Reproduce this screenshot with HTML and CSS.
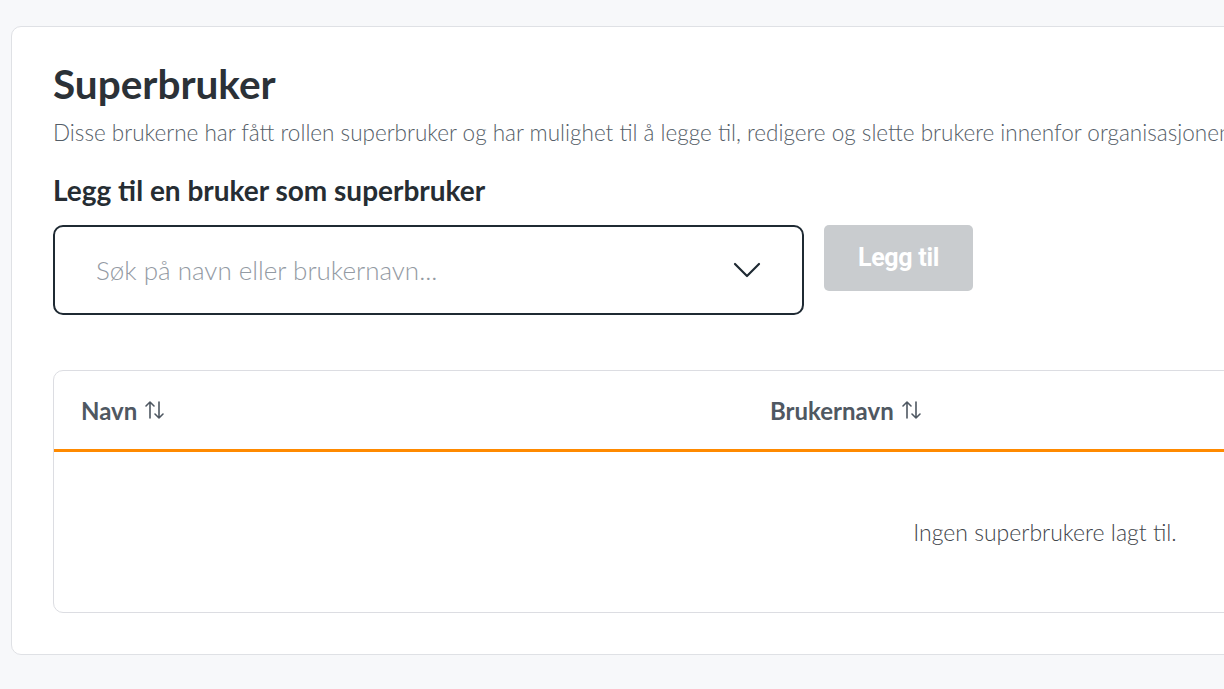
FILE: index.html
```html
<!DOCTYPE html>
<html lang="no">
<head>
    <meta charset="UTF-8">
    <meta name="viewport" content="width=device-width, initial-scale=1.0">
    <title>Superbruker</title>
    <link rel="stylesheet" href="styles.css">
</head>
<body>
    <section class="card">
        <h1>Superbruker</h1>
        <p class="lead">Disse brukerne har fått rollen superbruker og har mulighet til å legge til, redigere og slette brukere innenfor organisasjonen.</p>
        <h2>Legg til en bruker som superbruker</h2>
        <div class="add-row">
            <div class="select">
                <span class="placeholder">Søk på navn eller brukernavn...</span>
                <svg class="chevron" width="28" height="16" viewBox="0 0 28 16">
                    <polyline points="2,2 14,14 26,2" fill="none" stroke="#1f2a33" stroke-width="2.2" stroke-linecap="round" stroke-linejoin="round"/>
                </svg>
            </div>
            <button type="button" class="add-btn" disabled>Legg til</button>
        </div>

        <div class="table">
            <div class="thead">
                <div class="th col-name">Navn
                    <svg class="sort" width="22" height="22" viewBox="0 0 22 22">
                        <path d="M6 19V3M2 7l4-4 4 4" fill="none" stroke="#4f5862" stroke-width="1.6" stroke-linecap="round" stroke-linejoin="round"/>
                        <path d="M15 3v16M11 15l4 4 4-4" fill="none" stroke="#4f5862" stroke-width="1.6" stroke-linecap="round" stroke-linejoin="round"/>
                    </svg>
                </div>
                <div class="th col-user">Brukernavn
                    <svg class="sort" width="22" height="22" viewBox="0 0 22 22">
                        <path d="M6 19V3M2 7l4-4 4 4" fill="none" stroke="#4f5862" stroke-width="1.6" stroke-linecap="round" stroke-linejoin="round"/>
                        <path d="M15 3v16M11 15l4 4 4-4" fill="none" stroke="#4f5862" stroke-width="1.6" stroke-linecap="round" stroke-linejoin="round"/>
                    </svg>
                </div>
            </div>
            <div class="empty">Ingen superbrukere lagt til.</div>
        </div>
    </section>
</body>
</html>
```

FILE: styles.css
```css
html, body {
    overflow: hidden;
}
body {
    margin: 0;
    padding: 26px 0 0 11px;
    background: #f7f8fa;
    font-family: Lato, "Open Sans", sans-serif;
    color: #2b3137;
}
.card {
    width: 1984px;
    background: #fff;
    border: 1px solid #dfe1e5;
    border-radius: 10px;
    padding: 34px 41px 41px;
}
h1 {
    margin: 0;
    font-size: 40.5px;
    line-height: 46px;
    font-weight: 700;
    color: #2b3137;
}
.lead {
    margin: 12px 0 0;
    font-size: 22.5px;
    line-height: 28px;
    font-weight: 300;
    color: #555e68;
    white-space: nowrap;
}
h2 {
    margin: 27px 0 0;
    font-size: 28px;
    line-height: 32px;
    font-weight: 700;
    color: #262d33;
}
.add-row {
    display: flex;
    align-items: flex-start;
    gap: 20px;
    margin-top: 19px;
}
.select {
    box-sizing: border-box;
    width: 751px;
    height: 90px;
    border: 2px solid #1f2a33;
    border-radius: 10px;
    display: flex;
    align-items: center;
    justify-content: space-between;
    padding: 0 41px 0 41px;
}
.placeholder {
    font-size: 26px;
    font-weight: 300;
    color: #939aa3;
}
.chevron {
    display: block;
}
.add-btn {
    width: 149px;
    height: 66px;
    border: none;
    border-radius: 5px;
    background: #c9cccf;
    color: #fff;
    font-family: Roboto, sans-serif;
    font-weight: 700;
    font-size: 25px;
    letter-spacing: -0.3px;
    padding: 0 0 2px;
}
.table {
    margin-top: 55px;
    border: 1px solid #dcdde2;
    border-radius: 10px;
}
.thead {
    display: flex;
    height: 78px;
    align-items: center;
    border-bottom: 3px solid #ff8a00;
}
.th {
    display: flex;
    align-items: center;
    gap: 7px;
    font-size: 24px;
    font-weight: 700;
    color: #4f5862;
}
.col-name {
    width: 716px;
    padding-left: 27px;
    box-sizing: border-box;
}
.sort {
    display: block;
}
.empty {
    padding: 64px 0;
    line-height: 32px;
    text-align: center;
    font-size: 23px;
    font-weight: 300;
    color: #3f454b;
}
```
